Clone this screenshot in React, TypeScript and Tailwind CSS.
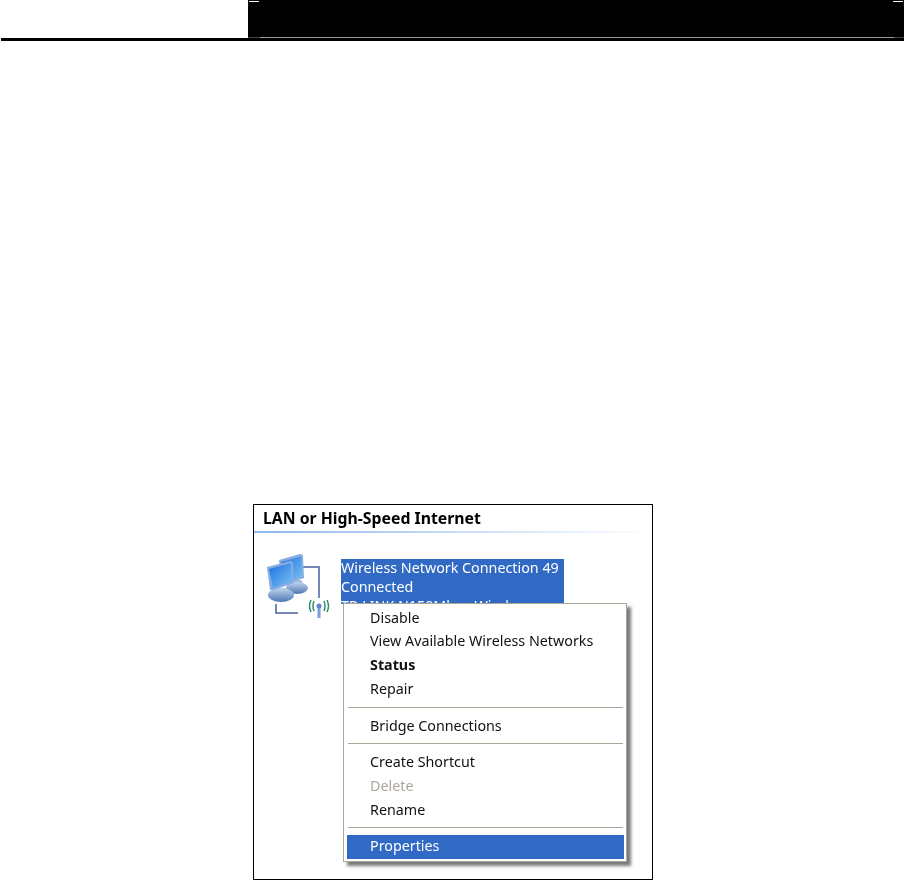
const menuFont = "font-['Noto_Sans',sans-serif] text-[14.3px] leading-[24px]";

function MenuItem({ label, className = "" }: { label: string; className?: string }) {
  return <div className={`h-6 pl-[23px] text-[#111111] ${menuFont} ${className}`}>{label}</div>;
}

function Separator() {
  return <div className="mx-[1px] h-px bg-[#aca899]" />;
}

function NetworkIcon() {
  return (
    <svg width="66" height="66" viewBox="0 0 66 66" className="shrink-0">
      <defs>
        <linearGradient id="screen" x1="0" y1="0" x2="1" y2="1">
          <stop offset="0" stopColor="#1c6fe0" />
          <stop offset="1" stopColor="#7cc2f4" />
        </linearGradient>
        <linearGradient id="body" x1="0" y1="0" x2="0" y2="1">
          <stop offset="0" stopColor="#c0d4ec" />
          <stop offset="1" stopColor="#4f78b6" />
        </linearGradient>
      </defs>
      {/* cables */}
      <path d="M34 13 H52 V44" fill="none" stroke="#4a5f9e" strokeWidth="1.5" />
      <path d="M9 50 V59 H31" fill="none" stroke="#4a5f9e" strokeWidth="1.5" />
      {/* rear monitor */}
      <path d="M22 26 H34 L38 32 H20 Z" fill="#9dbbe0" />
      <ellipse cx="30" cy="34" rx="11" ry="6" fill="url(#body)" />
      <path d="M12 6 L33 0 Q36 0 36 3 L37 24 L19 30 L15 30 Z" fill="#86aee0" />
      <path d="M14 8 L34 2.5 L35 22 L17 28 Z" fill="url(#screen)" />
      {/* front monitor */}
      <path d="M6 34 H20 L24 40 H4 Z" fill="#9dbbe0" />
      <ellipse cx="14" cy="41" rx="13" ry="7" fill="url(#body)" />
      <path d="M0 13 L23 7 Q26 7 26 10 L27 29 L7 36 L3 36 Z" fill="#86aee0" />
      <path d="M2 15 L24 9 L25 27 L6 34 Z" fill="url(#screen)" />
      {/* antenna */}
      <path d="M52 53 V64" stroke="#7d9ed6" strokeWidth="3" />
      <circle cx="52" cy="52" r="2.5" fill="#5f86c8" />
      <path d="M47 47 Q45 52 47 57 M57 47 Q59 52 57 57" fill="none" stroke="#2f8f6a" strokeWidth="1.5" />
      <path d="M44 46 Q41 52 44 58 M60 46 Q63 52 60 58" fill="none" stroke="#2f8f6a" strokeWidth="1.5" />
    </svg>
  );
}

export default function App() {
  return (
    <div className="min-h-[880px] w-[905px] overflow-hidden bg-white">
      {/* page header */}
      <div className="ml-px w-[903px] border-b-[3px] border-black">
        <div className="ml-[247px] flex h-[38px] flex-col justify-between bg-black">
          <div className="mt-px flex justify-between px-px">
            <div className="h-px w-[10px] bg-white" />
            <div className="h-px w-[10px] bg-white" />
          </div>
          <div className="flex h-px">
            <div className="w-[12px] bg-[#444444]" />
            <div className="flex-1 bg-[#999999]" />
            <div className="w-[10px] bg-[#444444]" />
          </div>
        </div>
      </div>

      {/* screenshot */}
      <div className="relative ml-[253px] mt-[463px] h-[376px] w-[400px] border border-black bg-white blur-[0.35px]">
        <div className="flex h-[26px] items-end whitespace-nowrap pl-[9px] font-['Noto_Sans',sans-serif] text-[15.8px] font-bold leading-[26px] text-black">
          LAN or High-Speed Internet
        </div>
        <div className="h-[2px] bg-gradient-to-r from-[#8fb8ea] to-white" />

        <div className="flex pl-[13px] pt-[21px]">
          <NetworkIcon />
          <div className="ml-[8px] mt-[5px] h-[45px] w-[223px] overflow-hidden bg-[#316ac5] font-['Noto_Sans',sans-serif] text-[14.3px] leading-[19px] text-white">
            <div className="-mt-px whitespace-nowrap">Wireless Network Connection 49</div>
            <div>Connected</div>
            <div className="whitespace-nowrap">TP-LINK N150Mbps Wireless</div>
          </div>
        </div>

        {/* context menu */}
        <div className="absolute left-[89px] top-[98px] w-[284px] border border-[#aca899] bg-white py-[2px] pl-[3px] pr-[2px] shadow-[4px_4px_3px_rgba(90,90,90,0.8)]">
          <MenuItem label="Disable" className="!h-[23px]" />
          <MenuItem label="View Available Wireless Networks" />
          <MenuItem label="Status" className="font-bold" />
          <MenuItem label="Repair" />
          <div className="mb-[6px] mt-[6px]"><Separator /></div>
          <MenuItem label="Bridge Connections" />
          <div className="mb-[6px] mt-[5px]"><Separator /></div>
          <MenuItem label="Create Shortcut" />
          <MenuItem label="Delete" className="!text-[#aca899]" />
          <MenuItem label="Rename" />
          <div className="mb-[7px] mt-[5px]"><Separator /></div>
          <MenuItem label="Properties" className="bg-[#316ac5] !leading-[22px] !text-white" />
        </div>
      </div>
    </div>
  );
}
